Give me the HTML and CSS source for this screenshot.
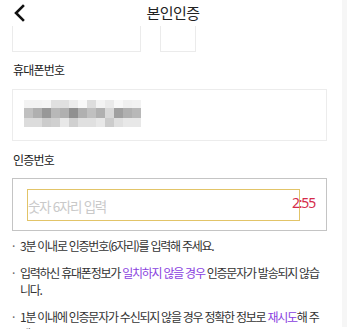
FILE: index.html
```html
<!DOCTYPE html>
<html lang="ko">
<head>
<meta charset="utf-8">
<link rel="stylesheet" href="styles.css">
</head>
<body>
<div class="page">
  <div class="main">
    <header class="header">
      <svg class="back" width="12" height="18" viewBox="0 0 12 18"><path d="M10 2 L3 9 L10 16" fill="none" stroke="#111" stroke-width="2.6" stroke-linecap="square"/></svg>
      <div class="title">본인인증</div>
    </header>
    <div class="prev-row">
      <div class="prev-box wide"></div>
      <div class="prev-box narrow"></div>
    </div>
    <div class="label label-phone">휴대폰번호</div>
    <div class="phone-box">
      <div class="mosaic">
        <i style="background:#f3f3f3"></i><i style="background:#f3f3f3"></i><i style="background:#f5f5f5"></i><i style="background:#e0e0e0"></i><i style="background:#e0e0e0"></i><i style="background:#ececec"></i><i style="background:#f8f8f8"></i><i style="background:#dddddd"></i><i style="background:#f3f3f3"></i><i style="background:#eaeaea"></i><i style="background:#f8f8f8"></i><i style="background:#f0f0f0"></i><i style="background:#f2f2f2"></i>
        <i style="background:#c0c0c0"></i><i style="background:#b0b0b0"></i><i style="background:#989898"></i><i style="background:#b8b8b8"></i><i style="background:#b0b0b0"></i><i style="background:#909090"></i><i style="background:#b0b0b0"></i><i style="background:#c0c0c0"></i><i style="background:#b0b0b0"></i><i style="background:#d8d8d8"></i><i style="background:#a0a0a0"></i><i style="background:#b0b0b0"></i><i style="background:#b8b8b8"></i>
        <i style="background:#dcdcdc"></i><i style="background:#dcdcdc"></i><i style="background:#cccccc"></i><i style="background:#d0d0d0"></i><i style="background:#e8e8e8"></i><i style="background:#d0d0d0"></i><i style="background:#e0e0e0"></i><i style="background:#e0e0e0"></i><i style="background:#e8e8e8"></i><i style="background:#cccccc"></i><i style="background:#e0e0e0"></i><i style="background:#e8e8e8"></i><i style="background:#e8e8e8"></i>
      </div>
    </div>
    <div class="label label-code">인증번호</div>
    <div class="code-box">
      <div class="code-input">
        <span class="placeholder">숫자 6자리 입력</span>
      </div>
      <span class="timer">2:55</span>
    </div>
    <ul class="notes">
      <li>3분 이내로 인증번호(6자리)를 입력해 주세요.</li>
      <li>입력하신 휴대폰정보가 <em>일치하지 않을 경우</em> 인증문자가 발송되지 않습니다.</li>
      <li>1분 이내에 인증문자가 수신되지 않을 경우 정확한 정보로 <em>재시도</em>해 주세요.</li>
    </ul>
  </div>
  <div class="scrollbar"></div>
</div>
</body>
</html>
```

FILE: styles.css
```css
html, body {
  margin: 0;
  padding: 0;
  background: #fff;
  overflow: hidden;
}
body {
  width: 347px;
  height: 329px;
  font-family: "Noto Sans CJK KR", "Noto Sans", sans-serif;
  color: #222;
}
.page {
  display: flex;
  height: 329px;
  overflow: hidden;
}
.main {
  width: 342px;
  flex: none;
  padding: 0 0 0 12px;
  box-sizing: border-box;
}
.scrollbar {
  width: 5px;
  flex: none;
  background: #f6f6f6;
  height: 327px;
}
.header {
  position: relative;
  height: 26px;
  display: flex;
  align-items: center;
}
.back {
  position: absolute;
  left: 1px;
  top: 4px;
}
.title {
  width: 100%;
  text-align: center;
  font-size: 15px;
  line-height: 24px;
  letter-spacing: -0.5px;
  margin-left: -4px;
  margin-top: -1px;
  color: #222;
}
.prev-row {
  display: flex;
  gap: 19px;
  height: 26px;
}
.prev-box {
  height: 25px;
  border: 1px solid #ebebeb;
  border-top: none;
  box-sizing: content-box;
}
.prev-box.wide { width: 127px; }
.prev-box.narrow { width: 34px; }
.label {
  font-size: 12px;
  line-height: 18px;
  letter-spacing: -0.8px;
  color: #222;
  padding-left: 1px;
}
.label-phone {
  margin-top: 9px;
}
.phone-box {
  margin-top: 10px;
  width: 315px;
  height: 52px;
  border: 1px solid #ececec;
  box-sizing: border-box;
  padding: 10px 0 0 11px;
}
.mosaic {
  display: grid;
  grid-template-columns: repeat(13, 9px);
  grid-template-rows: 8px 10px 9px;
}
.mosaic i { display: block; }
.label-code {
  margin-top: 10px;
}
.code-box {
  position: relative;
  margin-top: 9px;
  width: 315px;
  height: 53px;
  border: 1px solid #c4c4c4;
  box-sizing: border-box;
  padding: 10px 0 0 14px;
}
.code-input {
  width: 273px;
  height: 32px;
  border: 1px solid #e2c468;
  box-sizing: border-box;
  display: flex;
  align-items: center;
}
.placeholder {
  font-size: 13.5px;
  color: #c9c9c9;
  letter-spacing: -1.3px;
  margin-top: 1px;
}
.timer {
  position: absolute;
  left: 279px;
  top: 13px;
  font-family: "Noto Sans", sans-serif;
  font-size: 14px;
  line-height: 22px;
  color: #d52b4a;
  letter-spacing: -1.2px;
}
.notes {
  list-style: none;
  margin: 6px 0 0;
  padding: 0;
  width: 316px;
}
.notes li {
  position: relative;
  padding-left: 8px;
  font-size: 12px;
  line-height: 17px;
  letter-spacing: -1.25px;
  color: #333;
  margin-bottom: 10px;
}
.notes li::before {
  content: "·";
  position: absolute;
  left: 0;
  top: 0;
  color: #666;
}
.notes em {
  font-style: normal;
  color: #8a3fe0;
}
```
